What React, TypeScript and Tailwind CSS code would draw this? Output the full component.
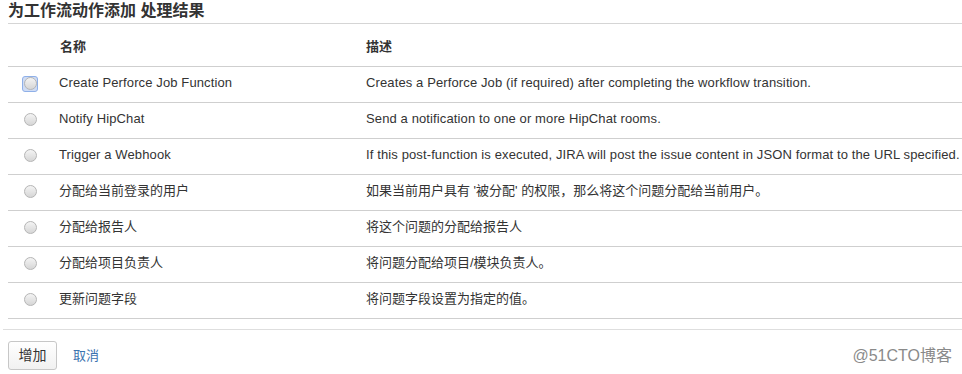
const rows = [
    { name: 'Create Perforce Job Function', desc: 'Creates a Perforce Job (if required) after completing the workflow transition.', latin: true },
    { name: 'Notify HipChat', desc: 'Send a notification to one or more HipChat rooms.', latin: true },
    { name: 'Trigger a Webhook', desc: 'If this post-function is executed, JIRA will post the issue content in JSON format to the URL specified.', latin: true },
    { name: '分配给当前登录的用户', desc: '如果当前用户具有 \'被分配\' 的权限，那么将这个问题分配给当前用户。' },
    { name: '分配给报告人', desc: '将这个问题的分配给报告人' },
    { name: '分配给项目负责人', desc: '将问题分配给项目/模块负责人。' },
    { name: '更新问题字段', desc: '将问题字段设置为指定的值。' },
];

function Radio({ focused }: { focused?: boolean }) {
    return (
        <span className={focused ? 'flex h-[16px] w-[16px] items-center justify-center rounded-[3px] border border-[#8fb0e8] bg-[#cfdcf4]' : 'flex h-[16px] w-[16px] items-center justify-center'}>
            <span className="block h-[13px] w-[13px] rounded-full border border-[#b5b5b5] bg-gradient-to-b from-[#f4f4f4] to-[#d6d6d6]" />
        </span>
    );
}

export default function App() {
    return (
        <div className="w-[962px] h-[374px] bg-white text-[#333] text-[13px] overflow-hidden" style={{ fontFamily: '"Liberation Sans", Arial, "Noto Sans CJK SC", sans-serif' }}>
            <div className="pl-[8px]">
                <h2 className="h-[24px] border-b border-[#d5d5d5] text-[16px] font-bold leading-[22px] text-[#333]">
                    为工作流动作添加 处理结果
                </h2>

                <div className="flex h-[43px] items-center border-b border-[#cfcfcf] text-[13px] font-bold">
                    <div className="w-[43px] shrink-0" />
                    <div className="w-[307px] shrink-0 pl-[9px] pt-[4px]">名称</div>
                    <div className="flex-1 pl-[8px] pt-[4px]">描述</div>
                </div>

                {rows.map((r, i) => (
                    <div key={r.name} className={r.latin ? 'flex h-[36px] items-center border-b border-[#cfcfcf] whitespace-nowrap tracking-[0.12px]' : 'flex h-[36px] items-center border-b border-[#cfcfcf] whitespace-nowrap'}>
                        <div className="flex w-[43px] shrink-0 justify-center pl-[1px] pb-[2px]">
                            <Radio focused={i === 0} />
                        </div>
                        <div className="w-[307px] shrink-0 pl-[8px] pb-[4px]">{r.name}</div>
                        <div className="flex-1 pl-[8px] pb-[4px]">{r.desc}</div>
                    </div>
                ))}
            </div>

            <div className="ml-[3px] mt-[10px] border-t border-[#dedede] pt-[11px] pl-[5px] flex items-center justify-between pr-[10px]">
                <div className="flex items-center">
                    <button className="h-[29px] w-[49px] rounded-[3px] border border-[#c7c7c7] bg-gradient-to-b from-white to-[#f1f1f1] text-[14px] text-[#333]">
                        增加
                    </button>
                    <a href="#" className="ml-[16px] text-[13px] text-[#3b73af]">取消</a>
                </div>
                <span className="text-[16px] text-[#8a8a8a]">@51CTO博客</span>
            </div>
        </div>
    );
}
